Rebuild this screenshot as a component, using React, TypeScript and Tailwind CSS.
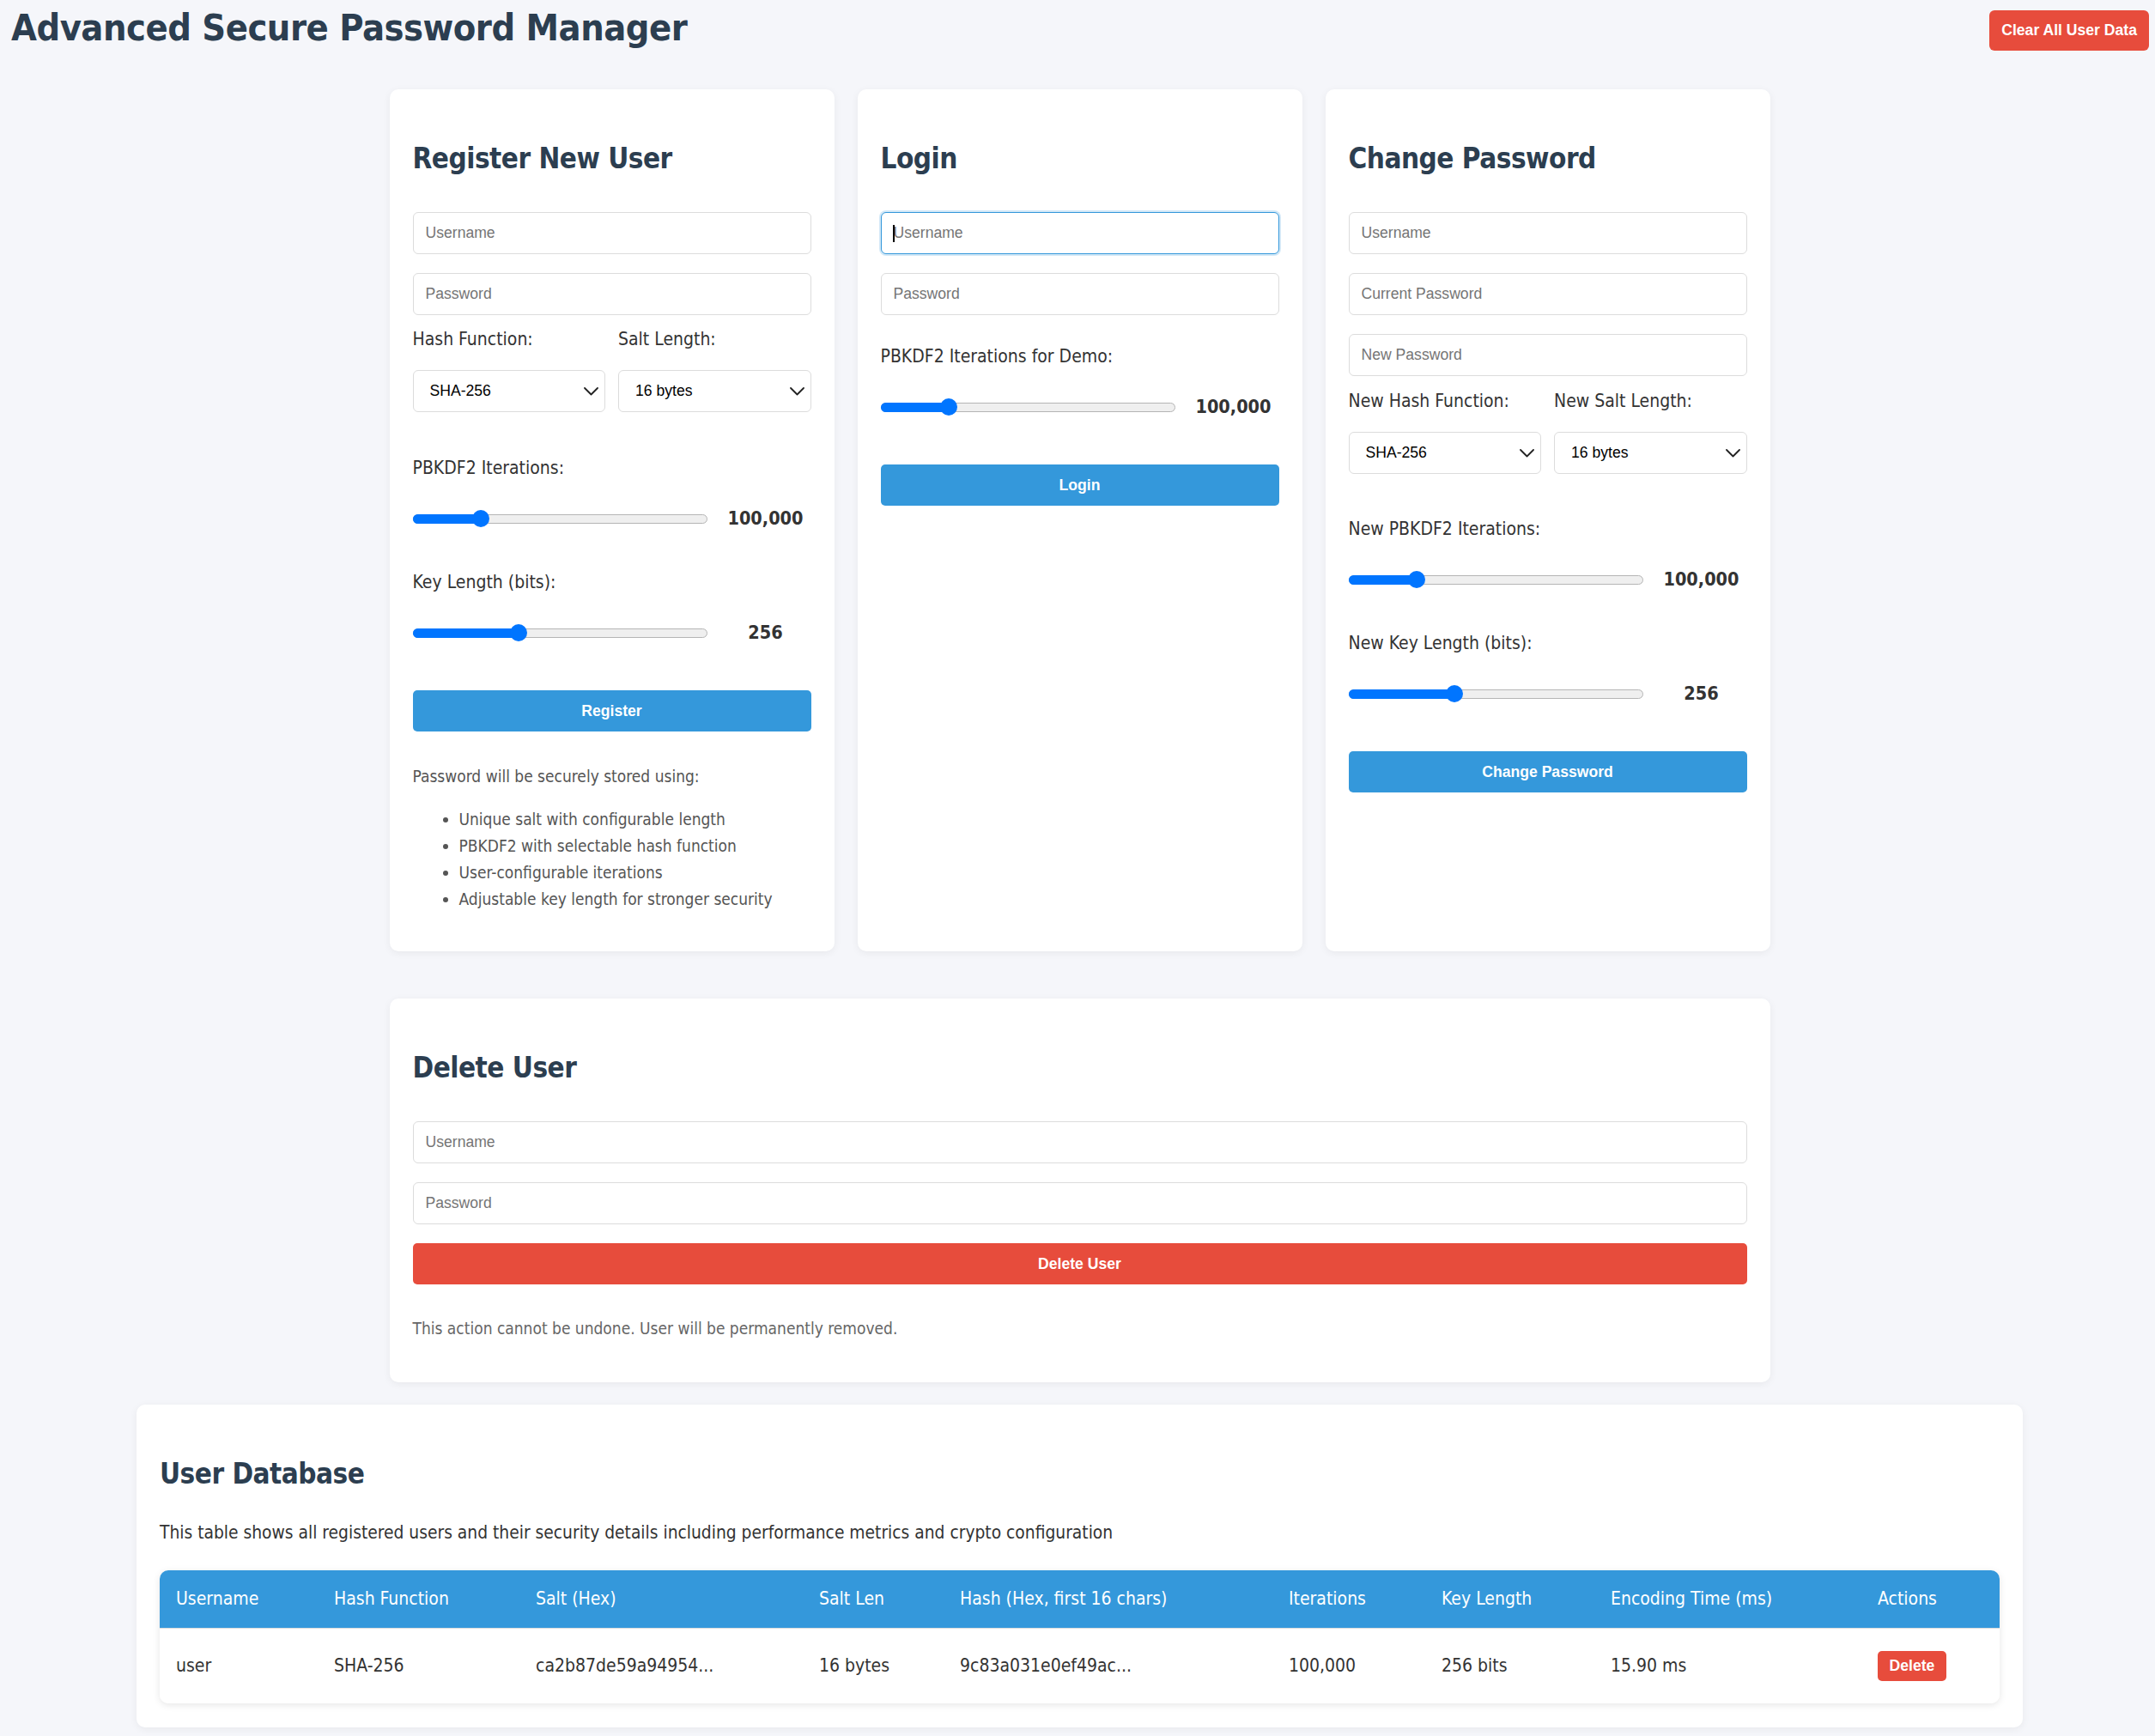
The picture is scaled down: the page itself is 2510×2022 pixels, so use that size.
import React from 'react';

const ARIAL = "font-['Liberation_Sans',Arial,sans-serif]";

const COLS = [
  { name: 'Username', w: 'w-[184px]', val: 'user' },
  { name: 'Hash Function', w: 'w-[235px]', val: 'SHA-256' },
  { name: 'Salt (Hex)', w: 'w-[330px]', val: 'ca2b87de59a94954...' },
  { name: 'Salt Len', w: 'w-[164px]', val: '16 bytes' },
  { name: 'Hash (Hex, first 16 chars)', w: 'w-[383px]', val: '9c83a031e0ef49ac...' },
  { name: 'Iterations', w: 'w-[178px]', val: '100,000' },
  { name: 'Key Length', w: 'w-[197px]', val: '256 bits' },
  { name: 'Encoding Time (ms)', w: 'w-[311px]', val: '15.90 ms' },
  { name: 'Actions', w: 'w-[161px]', val: '' },
];

function Heading({ children }: { children: React.ReactNode }) {
  return (
    <h2 className="mt-[34px] text-[33px] font-bold leading-[40px] tracking-[-0.5px] text-[#2c3e50]">
      {children}
    </h2>
  );
}

function Field({ placeholder, focused, className = '' }: { placeholder: string; focused?: boolean; className?: string }) {
  return (
    <div className={`relative ${className}`}>
      <input
        placeholder={placeholder}
        className={`block h-[49px] w-full rounded-[6px] border bg-white px-[14px] ${ARIAL} text-[17.6px] text-black outline-none placeholder:text-[#757575] ${
          focused ? 'border-[#3498db] shadow-[0_0_0_2px_rgba(52,152,219,0.22)]' : 'border-[#dcdcdc]'
        }`}
      />
      {focused && <span className="absolute left-[14px] top-[15px] h-[20px] w-[2px] bg-black" />}
    </div>
  );
}

function Pick({ label, value }: { label: string; value: string }) {
  return (
    <div className="flex-1">
      <div className="text-[21px] leading-[31px] text-[#333]">{label}</div>
      <div className="relative mt-[20px]">
        <select
          defaultValue={value}
          className={`block h-[49px] w-full appearance-none rounded-[6px] border border-[#dcdcdc] bg-white pl-[19px] ${ARIAL} text-[17.6px] text-black outline-none`}
        >
          <option>{value}</option>
        </select>
        <svg
          className="pointer-events-none absolute right-[8px] top-1/2 -translate-y-1/2"
          width="17"
          height="10"
          viewBox="0 0 17 10"
          fill="none"
        >
          <polyline points="1,1 8.5,8.5 16,1" stroke="#222" strokeWidth="1.8" strokeLinecap="round" strokeLinejoin="round" />
        </svg>
      </div>
    </div>
  );
}

function Range({ label, pct, value, className = '' }: { label: string; pct: number; value: string; className?: string }) {
  return (
    <div className={className}>
      <div className="text-[21px] leading-[31px] text-[#333]">{label}</div>
      <div className="mt-[23px] flex h-[40px] items-center">
        <div className="relative h-[11px] w-[343px] rounded-full border border-[#b5b5b5] bg-[#efefef]">
          <div className="absolute -left-px -top-px -bottom-px rounded-full bg-[#0075ff]" style={{ width: `${pct}%` }} />
          <div
            className="absolute top-1/2 h-[20px] w-[20px] -translate-x-1/2 -translate-y-1/2 rounded-full bg-[#0075ff]"
            style={{ left: `${pct}%` }}
          />
        </div>
        <span className="ml-[18px] w-[100px] text-center text-[21.5px] font-bold text-[#333]">{value}</span>
      </div>
    </div>
  );
}

function Button({ children }: { children: React.ReactNode }) {
  return (
    <button className={`mt-[47px] block h-[48px] w-full rounded-[5px] bg-[#3498db] ${ARIAL} text-[17.6px] font-bold text-white`}>
      {children}
    </button>
  );
}

const CARD = 'rounded-[10px] bg-white px-[27px] pt-[27px] shadow-[0_2px_10px_rgba(0,0,0,0.06)]';

export default function App() {
  return (
    <div className="min-h-screen bg-[#f5f6fa] pb-[24px] pl-[5px] font-['DejaVu_Sans_Condensed',Tahoma,sans-serif]">
      <header className="flex h-[104px] items-start justify-between pl-[8px] pr-[7px]">
        <h1 className="mt-[6px] text-[43px] font-bold leading-[52px] tracking-[-0.5px] text-[#2c3e50]">
          Advanced Secure Password Manager
        </h1>
        <button className={`mt-[12px] h-[47px] rounded-[6px] bg-[#e74c3c] px-[14px] ${ARIAL} text-[17.6px] font-bold text-white`}>
          Clear All User Data
        </button>
      </header>

      <div className="mx-auto w-[1608px]">
        <div className="flex gap-[27px]">
          <section className={`w-[518px] pb-[45px] ${CARD}`}>
            <Heading>Register New User</Heading>
            <Field placeholder="Username" className="mt-[42px]" />
            <Field placeholder="Password" className="mt-[22px]" />
            <div className="mt-[13px] flex gap-[15px]">
              <Pick label="Hash Function:" value="SHA-256" />
              <Pick label="Salt Length:" value="16 bytes" />
            </div>
            <Range className="mt-[50px]" label="PBKDF2 Iterations:" pct={22.9} value="100,000" />
            <Range className="mt-[39px]" label="Key Length (bits):" pct={35.9} value="256" />
            <Button>Register</Button>
            <p className="mt-[37px] text-[19px] leading-[31px] text-[#555]">Password will be securely stored using:</p>
            <ul className="mt-[19px] list-disc pl-[54px] text-[19px] leading-[31px] text-[#555]">
              <li>Unique salt with configurable length</li>
              <li>PBKDF2 with selectable hash function</li>
              <li>User-configurable iterations</li>
              <li>Adjustable key length for stronger security</li>
            </ul>
          </section>

          <section className={`w-[518px] ${CARD}`}>
            <Heading>Login</Heading>
            <Field placeholder="Username" focused className="mt-[42px]" />
            <Field placeholder="Password" className="mt-[22px]" />
            <Range className="mt-[33px]" label="PBKDF2 Iterations for Demo:" pct={22.9} value="100,000" />
            <Button>Login</Button>
          </section>

          <section className={`w-[518px] ${CARD}`}>
            <Heading>Change Password</Heading>
            <Field placeholder="Username" className="mt-[42px]" />
            <Field placeholder="Current Password" className="mt-[22px]" />
            <Field placeholder="New Password" className="mt-[22px]" />
            <div className="mt-[14px] flex gap-[15px]">
              <Pick label="New Hash Function:" value="SHA-256" />
              <Pick label="New Salt Length:" value="16 bytes" />
            </div>
            <Range className="mt-[49px]" label="New PBKDF2 Iterations:" pct={22.9} value="100,000" />
            <Range className="mt-[39px]" label="New Key Length (bits):" pct={35.9} value="256" />
            <Button>Change Password</Button>
          </section>
        </div>

        <section className={`mt-[55px] pb-[47px] ${CARD}`}>
          <Heading>Delete User</Heading>
          <Field placeholder="Username" className="mt-[42px]" />
          <Field placeholder="Password" className="mt-[22px]" />
          <button className={`mt-[22px] block h-[48px] w-full rounded-[5px] bg-[#e74c3c] ${ARIAL} text-[17.6px] font-bold text-white`}>
            Delete User
          </button>
          <p className="mt-[36px] text-[19px] leading-[31px] text-[#666]">
            This action cannot be undone. User will be permanently removed.
          </p>
        </section>
      </div>

      <section className={`mx-auto mt-[26px] w-[2197px] pb-[28px] ${CARD}`}>
        <Heading>User Database</Heading>
        <p className="mt-[33px] text-[20.8px] leading-[31px] text-[#333]">
          This table shows all registered users and their security details including performance metrics and crypto configuration
        </p>
        <div className="mt-[28px] overflow-hidden rounded-[10px] shadow-[0_2px_8px_rgba(0,0,0,0.1)]">
          <table className="w-full table-fixed border-collapse text-left">
            <colgroup>
              {COLS.map((c) => (
                <col key={c.name} className={c.w} />
              ))}
            </colgroup>
            <thead>
              <tr className="h-[67px] bg-[#3498db]">
                {COLS.map((c) => (
                  <th key={c.name} className="pl-[19px] text-[21px] font-normal text-white">
                    {c.name}
                  </th>
                ))}
              </tr>
            </thead>
            <tbody>
              <tr className="h-[88px] border-t border-[#dddddd] bg-white">
                {COLS.map((c) =>
                  c.name === 'Actions' ? (
                    <td key={c.name} className="pl-[19px]">
                      <button className={`h-[35px] w-[80px] rounded-[5px] bg-[#e74c3c] ${ARIAL} text-[17.6px] font-bold text-white`}>
                        Delete
                      </button>
                    </td>
                  ) : (
                    <td key={c.name} className="pl-[19px] text-[21px] text-[#333]">
                      {c.val}
                    </td>
                  )
                )}
              </tr>
            </tbody>
          </table>
        </div>
      </section>
    </div>
  );
}
